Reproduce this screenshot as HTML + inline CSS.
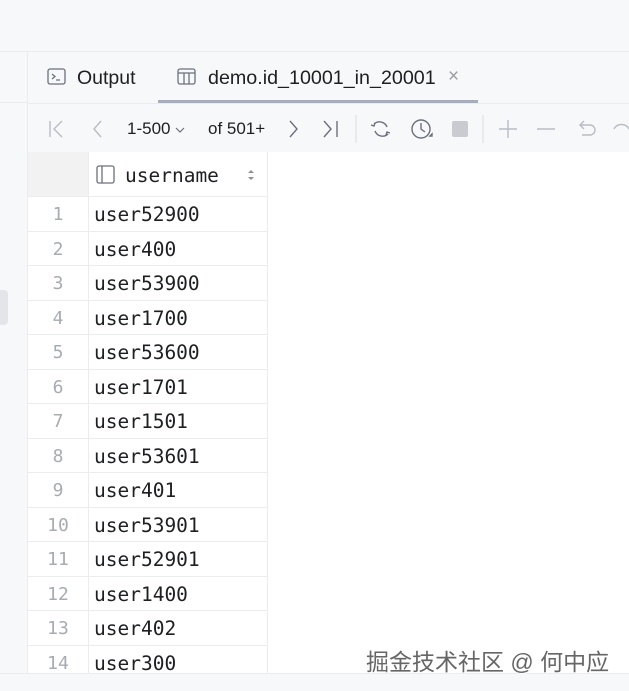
<!DOCTYPE html>
<html><head><style>
*{margin:0;padding:0;box-sizing:border-box}
body{width:629px;height:691px;overflow:hidden;background:#f7f8fa;font-family:"Liberation Sans",sans-serif;position:relative}
.abs{position:absolute}
.mono{font-family:"DejaVu Sans Mono","Liberation Mono",monospace}
</style></head><body>
<div class="abs" style="left:0;top:51px;width:629px;height:1px;background:#ebecf0"></div>
<div class="abs" style="left:27px;top:51px;width:1px;height:640px;background:#ebecf0"></div>
<div class="abs" style="left:0;top:102px;width:27px;height:1px;background:#ebecf0"></div>
<div class="abs" style="left:0;top:290px;width:8px;height:35px;background:#e4e5e8;border-radius:0 4px 4px 0"></div>
<!-- tabs -->
<svg class="abs" style="left:47px;top:68px" width="20" height="18" viewBox="0 0 20 18"><rect x="1" y="1" width="17" height="15" rx="2" fill="none" stroke="#6c707e" stroke-width="1.3"/><path d="M5 6l3 2.5-3 2.5M9 12h4" fill="none" stroke="#6c707e" stroke-width="1.3"/></svg>
<div class="abs" style="left:77px;top:67px;font-size:19.5px;color:#1e1f22">Output</div>
<svg class="abs" style="left:177px;top:68px" width="20" height="18" viewBox="0 0 20 18"><rect x="1" y="1" width="17" height="15" rx="2" fill="none" stroke="#6c707e" stroke-width="1.3"/><path d="M1 5h17M7 5v11M12 5v11" fill="none" stroke="#6c707e" stroke-width="1.3"/></svg>
<div class="abs" style="left:208px;top:67px;font-size:19.7px;color:#1e1f22">demo.id_10001_in_20001</div>
<div class="abs" style="left:448px;top:66px;font-size:19px;color:#9a9ca3">×</div>
<div class="abs" style="left:158px;top:100px;width:320px;height:3px;background:#a8adbd"></div>
<div class="abs" style="left:28px;top:103px;width:601px;height:1px;background:#ebecf0"></div>
<!-- toolbar -->
<svg class="abs" style="left:40px;top:115px" width="589" height="28" viewBox="0 0 589 28" fill="none" stroke-width="1.4">
<path d="M10 6v16M22 6l-8 8 8 8" stroke="#b9bcc3"/>
<path d="M61 6l-7 8 7 8" stroke="#b9bcc3"/>
<path d="M250 6l7 8-7 8" stroke="#6c707e"/>
<path d="M284 6l7 8-7 8M297 6v16" stroke="#6c707e"/>
<path d="M136 13l4 4 4-4" stroke="#6c707e" stroke-width="1.2"/>
<line x1="316" y1="0" x2="316" y2="28" stroke="#e2e3e6"/>
<path d="M334 9a8 8 0 0 1 13 3M348 19a8 8 0 0 1-13-3M331 10l3 1 1-3M350 18l-3-1-1 3" stroke="#6c707e"/>
<circle cx="381" cy="14" r="9" stroke="#6c707e"/><path d="M381 8v6l4 3" stroke="#6c707e"/><path d="M390 21l2 0 0 -2z" fill="#6c707e" stroke="#6c707e"/>
<rect x="412" y="6" width="16" height="16" rx="2" fill="#c9cbd0" stroke="none"/>
<line x1="443" y1="0" x2="443" y2="28" stroke="#e2e3e6"/>
<path d="M468 5v18M459 14h18" stroke="#b9bcc3"/>
<path d="M497 14h18" stroke="#b9bcc3"/>
<path d="M540 10h10a5 5 0 0 1 0 10h-8M544 6l-4 4 4 4" stroke="#b9bcc3"/>
<path d="M574 14c3-6 12-6 15 0" stroke="#b9bcc3"/>
</svg>
<div class="abs" style="left:127px;top:119px;font-size:17px;color:#1e1f22">1-500</div>
<div class="abs" style="left:208px;top:119px;font-size:17px;color:#1e1f22">of 501+</div>
<!-- table -->
<div class="abs" style="left:28px;top:152px;width:601px;height:521px;background:#fff"></div>
<div class="abs" style="left:28px;top:152px;width:60px;height:44px;background:#f2f2f3"></div>
<div class="abs" style="left:88px;top:152px;width:1px;height:521px;background:#ebecf0"></div>
<div class="abs" style="left:267px;top:152px;width:1px;height:521px;background:#ebecf0"></div>
<svg class="abs" style="left:96px;top:165px" width="20" height="20" viewBox="0 0 20 20"><rect x="1" y="1" width="17" height="17" rx="2" fill="none" stroke="#6c707e" stroke-width="1.3"/><path d="M6 1v17" stroke="#6c707e" stroke-width="1.3"/></svg>
<div class="abs mono" style="left:125px;top:164px;font-size:19.5px;color:#1e1f22">username</div>
<svg class="abs" style="left:246px;top:168px" width="10" height="14"><path d="M2 5l3-3 3 3zM2 9l3 3 3-3z" fill="#8c8f96"/></svg>
<div id="rows"></div>
<div class="abs" style="left:0;top:673px;width:629px;height:18px;background:#f7f8fa;border-top:1px solid #ebecf0"></div>
<div class="abs" style="left:366px;top:643px;font-size:23px;color:#666;font-family:'Liberation Sans','Noto Sans CJK SC',sans-serif;text-shadow:1px 1px 0 #fff">掘金技术社区 @ 何中应</div>
<script>
var n=["user52900","user400","user53900","user1700","user53600","user1701","user1501","user53601","user401","user53901","user52901","user1400","user402","user300"];
var h="";
for(var i=0;i<14;i++){var t=196+i*34.5;
h+='<div class="abs" style="left:28px;top:'+t+'px;width:240px;height:1px;background:#ebecf0"></div>';
h+='<div class="abs mono" style="left:28px;top:'+(t+8)+'px;width:60px;text-align:center;font-size:18px;color:#a8abb2">'+(i+1)+'</div>';
h+='<div class="abs mono" style="left:94px;top:'+(t+7)+'px;font-size:19.5px;color:#1e1f22">'+n[i]+'</div>';}
document.getElementById("rows").outerHTML=h;
</script>
</body></html>
